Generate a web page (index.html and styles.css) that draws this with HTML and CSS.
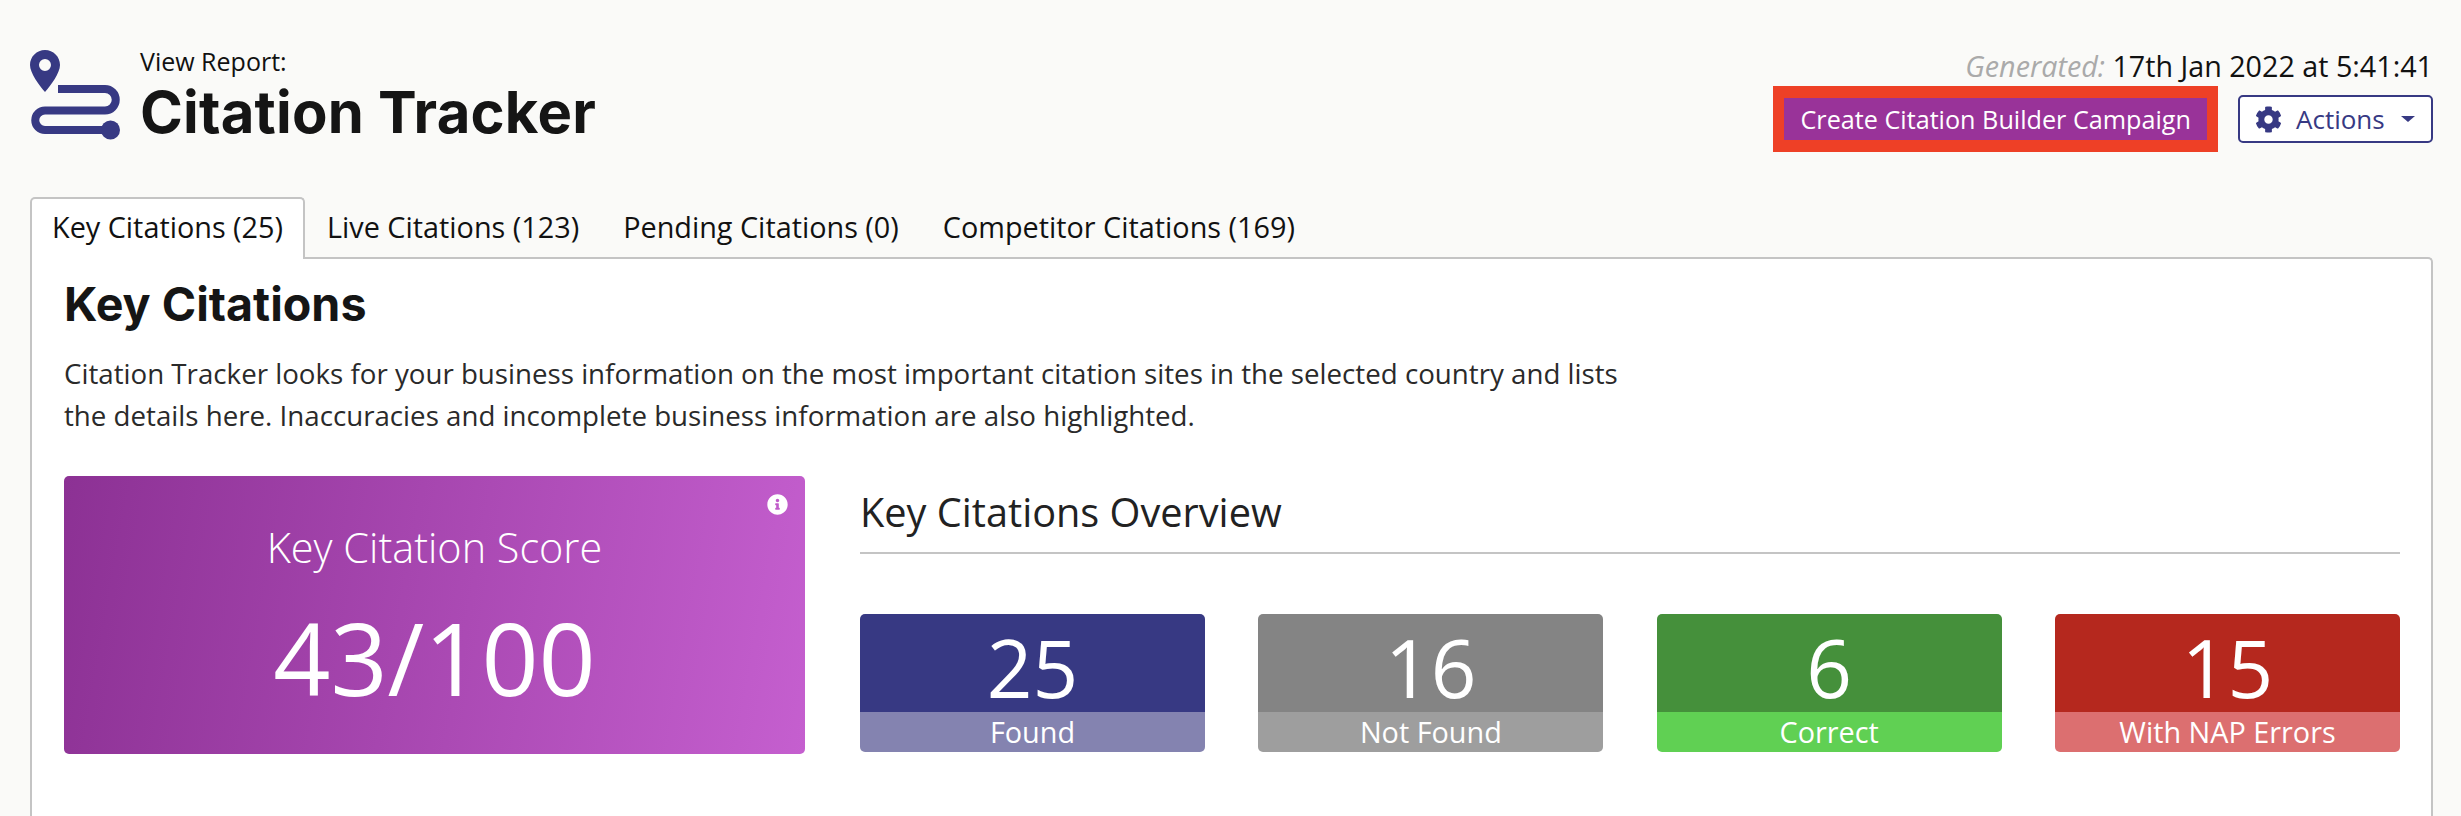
FILE: index.html
```html
<!DOCTYPE html>
<html lang="en">

<head>
    <meta charset="UTF-8">
    <meta name="viewport" content="width=device-width, initial-scale=1.0">
    <title>Citation Tracker</title>
    <link rel="stylesheet" href="styles.css">
</head>

<body>

    <!-- Header -->
    <div class="header">
        <div class="brand">
            <svg class="logo" viewBox="0 0 90 90" width="90" height="90">
                <path class="logo-pin" fill-rule="evenodd" d="M15 0C6.7 0 0 6.7 0 15c0 8 9 20 15 27 6-7 15-19 15-27C30 6.7 23.3 0 15 0zm0 9a6 6 0 1 1 0 12 6 6 0 0 1 0-12z"/>
                <path class="logo-road" d="M28 39H75A10.75 10.75 0 0 1 75 60.5H15A9.75 9.75 0 0 0 15 80H80"/>
                <circle class="logo-pin" cx="80.5" cy="80" r="9.5"/>
            </svg>
            <div>
                <div class="pre-title">View Report:</div>
                <div class="title">Citation Tracker</div>
            </div>
        </div>
        <div class="header-right">
            <div class="generated"><em>Generated:</em> 17th Jan 2022 at 5:41:41</div>
            <div class="actions">
                <div class="highlight"><a href="#" class="btn-campaign">Create Citation Builder Campaign</a></div>
                <a href="#" class="btn-actions">
                    <svg class="gear" viewBox="0 0 512 512" width="27" height="27"><path d="M487.4 315.7l-42.6-24.6c4.3-23.2 4.3-47 0-70.2l42.6-24.6c4.9-2.8 7.1-8.6 5.5-14-11.1-35.6-30-67.8-54.7-94.6-3.8-4.1-10-5.1-14.8-2.3L380.8 110c-17.9-15.4-38.5-27.3-60.8-35.1V25.8c0-5.6-3.9-10.5-9.4-11.7-36.7-8.2-74.3-7.8-109.2 0-5.5 1.2-9.4 6.1-9.4 11.7V75c-22.2 7.9-42.8 19.8-60.8 35.1L88.7 85.5c-4.9-2.8-11-1.9-14.8 2.3-24.7 26.7-43.6 58.9-54.7 94.6-1.7 5.4.6 11.2 5.5 14L67.3 221c-4.3 23.2-4.3 47 0 70.2l-42.6 24.6c-4.9 2.8-7.1 8.6-5.5 14 11.1 35.6 30 67.8 54.7 94.6 3.8 4.1 10 5.1 14.8 2.3l42.6-24.6c17.9 15.4 38.5 27.3 60.8 35.1v49.2c0 5.6 3.9 10.5 9.4 11.7 36.7 8.2 74.3 7.8 109.2 0 5.5-1.2 9.4-6.1 9.4-11.7v-49.2c22.2-7.9 42.8-19.8 60.8-35.1l42.6 24.6c4.9 2.8 11 1.9 14.8-2.3 24.7-26.7 43.6-58.9 54.7-94.6 1.5-5.5-.7-11.3-5.6-14.1zM256 336c-44.1 0-80-35.9-80-80s35.9-80 80-80 80 35.9 80 80-35.9 80-80 80z"/></svg>
                    Actions
                    <span class="caret"></span>
                </a>
            </div>
        </div>
    </div>

    <!-- Tabs -->
    <ul class="tabs">
        <li class="active"><a href="#">Key Citations (25)</a></li>
        <li><a href="#">Live Citations (123)</a></li>
        <li><a href="#">Pending Citations (0)</a></li>
        <li><a href="#">Competitor Citations (169)</a></li>
    </ul>

    <!-- Main Content -->
    <div class="panel">
        <h2>Key Citations</h2>
        <p class="intro">Citation Tracker looks for your business information on the most important citation sites in the selected country and lists the details here. Inaccuracies and incomplete business information are also highlighted.</p>

        <div class="summary">
            <div class="score-card">
                <svg class="info" viewBox="0 0 512 512" width="21" height="21"><path d="M256 8C119 8 8 119.1 8 256c0 137 111 248 248 248s248-111 248-248C504 119.1 393 8 256 8zm0 110c23.2 0 42 18.8 42 42s-18.8 42-42 42-42-18.8-42-42 18.8-42 42-42zm56 254c0 6.6-5.4 12-12 12h-88c-6.6 0-12-5.4-12-12v-24c0-6.6 5.4-12 12-12h12v-64h-12c-6.6 0-12-5.4-12-12v-24c0-6.6 5.4-12 12-12h64c6.6 0 12 5.4 12 12v100h12c6.6 0 12 5.4 12 12v24z"/></svg>
                <div class="score-label">Key Citation Score</div>
                <div class="score-value">43/100</div>
            </div>

            <div class="overview">
                <h3>Key Citations Overview</h3>
                <div class="stats">
                    <div class="stat stat-found">
                        <div class="stat-num">25</div>
                        <div class="stat-label">Found</div>
                    </div>
                    <div class="stat stat-missing">
                        <div class="stat-num">16</div>
                        <div class="stat-label">Not Found</div>
                    </div>
                    <div class="stat stat-correct">
                        <div class="stat-num">6</div>
                        <div class="stat-label">Correct</div>
                    </div>
                    <div class="stat stat-errors">
                        <div class="stat-num">15</div>
                        <div class="stat-label">With NAP Errors</div>
                    </div>
                </div>
            </div>
        </div>
    </div>

</body>

</html>
```

FILE: styles.css
```css
html,
body {
    height: 816px;
    overflow: hidden;
}

body {
    font-family: "Open Sans", sans-serif;
    background: #fafaf8;
    margin: 0;
    padding: 0 28px 0 30px;
    box-sizing: border-box;
    color: #111;
    display: flex;
    flex-direction: column;
}

a {
    text-decoration: none;
}

/* Header */
.header {
    display: flex;
    justify-content: space-between;
    height: 197px;
    box-sizing: border-box;
    padding-top: 46px;
}

.brand {
    display: flex;
    gap: 20px;
    align-items: flex-start;
}

.logo {
    margin-top: 4px;
}

.logo-pin {
    fill: #373983;
}

.logo-road {
    fill: none;
    stroke: #373983;
    stroke-width: 8;
}

.pre-title {
    font-size: 25px;
    line-height: 30px;
}

.title {
    font-family: Inter, sans-serif;
    font-weight: 700;
    font-size: 58px;
    line-height: 60px;
    letter-spacing: 0.2px;
    margin-top: 6px;
    color: #151515;
}

.header-right {
    display: flex;
    flex-direction: column;
    align-items: flex-end;
}

.generated {
    font-size: 28.7px;
    line-height: 34px;
    margin-top: 3px;
    color: #111;
}

.generated em {
    color: #aaa;
}

.actions {
    display: flex;
    align-items: center;
    gap: 20px;
    margin-top: 3px;
}

.highlight {
    border-style: solid;
    border-color: #ee4026;
    border-width: 12px 11px;
}

.btn-campaign {
    display: block;
    background: #993399;
    color: #fff;
    font-size: 25.2px;
    font-weight: 500;
    line-height: 42px;
    padding: 0 16px;
}

.btn-actions {
    display: flex;
    align-items: center;
    gap: 14px;
    height: 48px;
    width: 195px;
    box-sizing: border-box;
    padding-left: 15px;
    border: 2px solid #373983;
    border-radius: 5px;
    background: #fff;
    color: #373983;
    font-size: 26px;
}

.gear {
    fill: #373983;
}

.caret {
    border-top: 6px solid #373983;
    border-left: 7px solid transparent;
    border-right: 7px solid transparent;
    margin-left: 2px;
}

/* Tabs */
.tabs {
    list-style: none;
    margin: 0 0 -2px;
    padding: 0;
    display: flex;
    position: relative;
    z-index: 1;
}

.tabs li {
    height: 62px;
    box-sizing: border-box;
    border: 2px solid transparent;
    border-bottom: none;
    border-radius: 5px 5px 0 0;
}

.tabs li a {
    display: block;
    padding: 0 20px;
    font-size: 28.8px;
    line-height: 56px;
    color: #111;
}

.tabs li.active {
    background: #fff;
    border-color: #c4c4c4;
}

/* Panel */
.panel {
    flex: 1;
    background: #fff;
    border: 2px solid #c4c4c4;
    border-bottom: none;
    border-radius: 0 5px 0 0;
    padding: 0 31px 0 32px;
}

h2 {
    font-family: Inter, sans-serif;
    font-weight: 700;
    font-size: 46.6px;
    line-height: 56px;
    margin: 17px 0 0;
    color: #151515;
}

.intro {
    font-size: 27.7px;
    line-height: 42px;
    margin: 20px 0 0;
    width: 1570px;
    color: #2a2a2a;
}

.summary {
    display: flex;
    gap: 55px;
    margin-top: 40px;
}

.score-card {
    position: relative;
    width: 741px;
    height: 278px;
    border-radius: 5px;
    background: linear-gradient(100deg, #8c3194, #c55fcf);
    color: #fff;
    text-align: center;
}

.info {
    position: absolute;
    top: 18px;
    right: 17px;
    fill: #fff;
}

.score-label {
    font-size: 41.4px;
    font-weight: 300;
    line-height: 54px;
    margin-top: 44px;
}

.score-value {
    font-size: 100px;
    font-weight: 400;
    line-height: 120px;
    margin-top: 23px;
}

.overview {
    flex: 1;
}

h3 {
    font-size: 39.7px;
    font-weight: 400;
    line-height: 50px;
    margin: 11px 0 0;
    padding-bottom: 15px;
    border-bottom: 2px solid #c4c4c4;
    color: #222;
}

.stats {
    display: flex;
    justify-content: space-between;
    margin-top: 60px;
}

.stat {
    width: 345px;
    color: #fff;
    text-align: center;
}

.stat-num {
    font-size: 80px;
    line-height: 98px;
    padding-top: 4px;
    height: 94px;
    border-radius: 5px 5px 0 0;
}

.stat-label {
    font-size: 28.8px;
    line-height: 40px;
    border-radius: 0 0 5px 5px;
}

.stat-found .stat-num {
    background: #373983;
}

.stat-found .stat-label {
    background: #8483b0;
}

.stat-missing .stat-num {
    background: #848484;
}

.stat-missing .stat-label {
    background: #9e9e9e;
}

.stat-correct .stat-num {
    background: #45903b;
}

.stat-correct .stat-label {
    background: #60d053;
}

.stat-errors .stat-num {
    background: #b5281e;
}

.stat-errors .stat-label {
    background: #dc6f70;
}
```
